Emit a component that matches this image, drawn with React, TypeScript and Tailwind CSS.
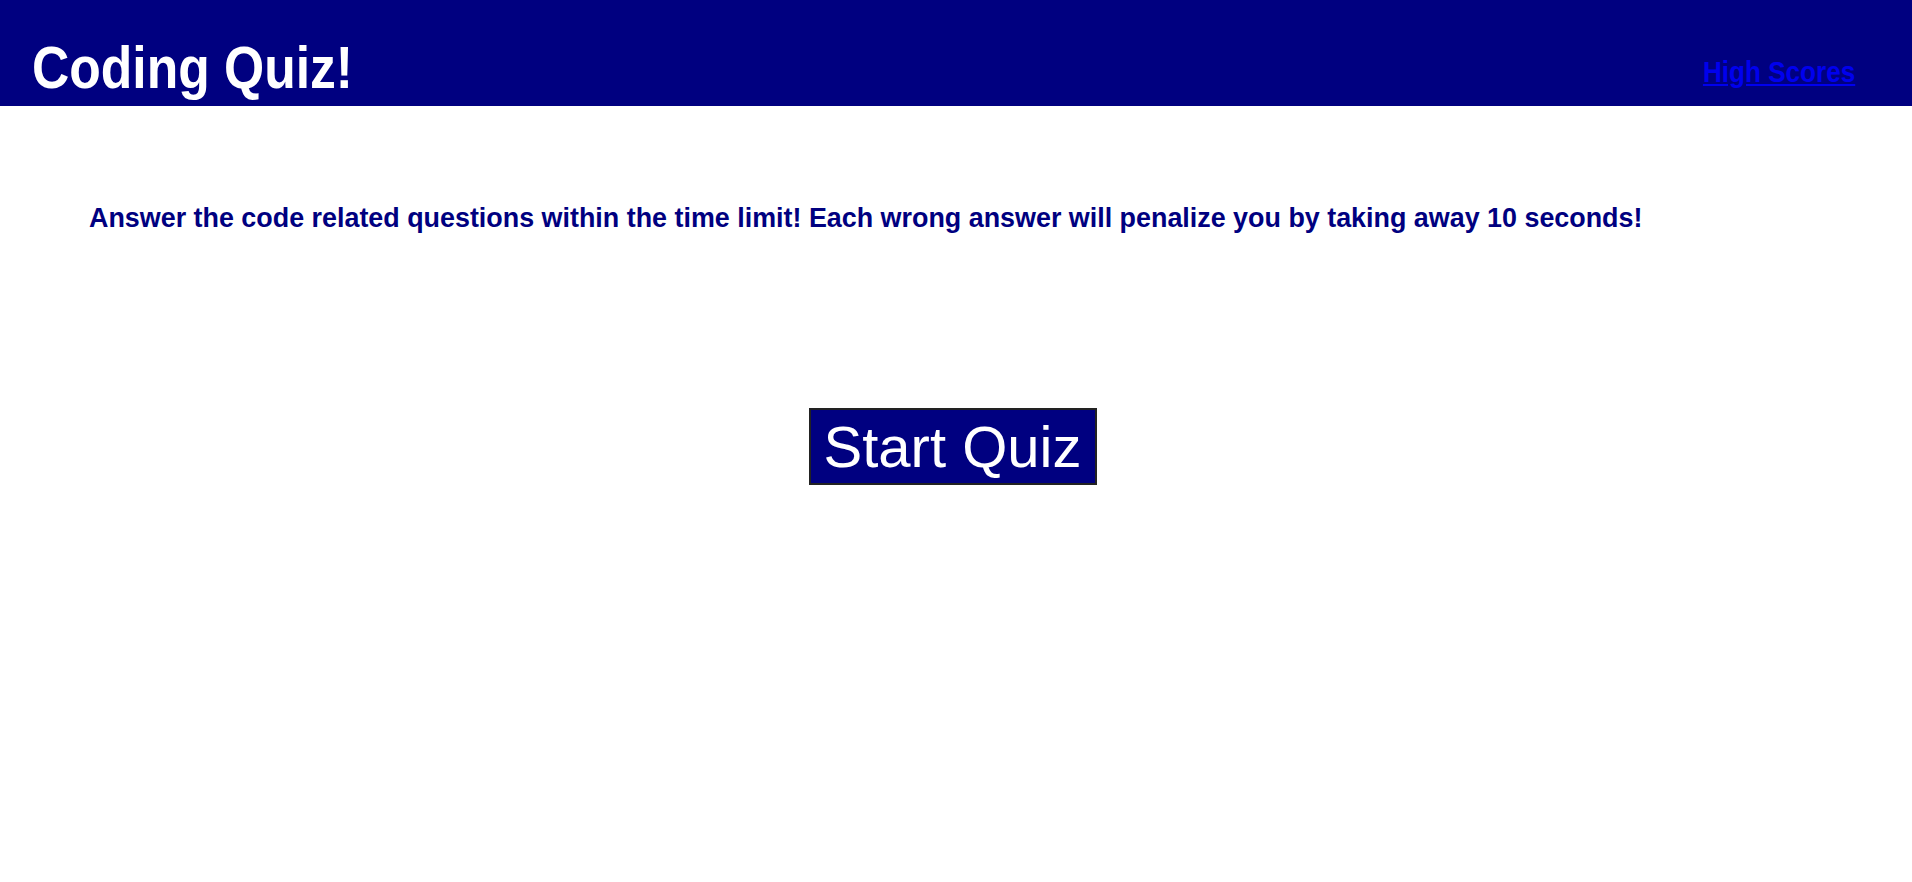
export default function App() {
  const sans = { fontFamily: '"Liberation Sans", Arial, sans-serif' };
  return (
    <div className="min-h-[882px] bg-white">
      <header className="flex h-[106px] items-end justify-between bg-[#000080] pl-[32px] pr-[57px]">
        <h1 className="inline-block origin-left scale-x-[0.86] pb-[8px] text-[60px] font-bold leading-none text-white" style={sans}>Coding Quiz!</h1>
        <a href="#" className="inline-block origin-right scale-x-[0.9] pb-[19px] text-[29px] font-bold leading-none text-[#0000ee] underline" style={sans}>High Scores</a>
      </header>
      <main className="flex flex-col">
        <div className="pl-[89px] pt-[98px]">
          <p className="inline-block origin-left scale-x-[0.96] whitespace-nowrap text-[28px] font-bold leading-none text-[#000080]" style={sans}>
            Answer the code related questions within the time limit! Each wrong answer will penalize you by taking away 10 seconds!
          </p>
        </div>
        <div className="flex justify-center pr-[7px] pt-[175px]">
          <button className="h-[77px] w-[288px] border-2 border-[#222] bg-[#000080] text-[58px] leading-none text-white" style={sans}>
            Start Quiz
          </button>
        </div>
      </main>
    </div>
  );
}
